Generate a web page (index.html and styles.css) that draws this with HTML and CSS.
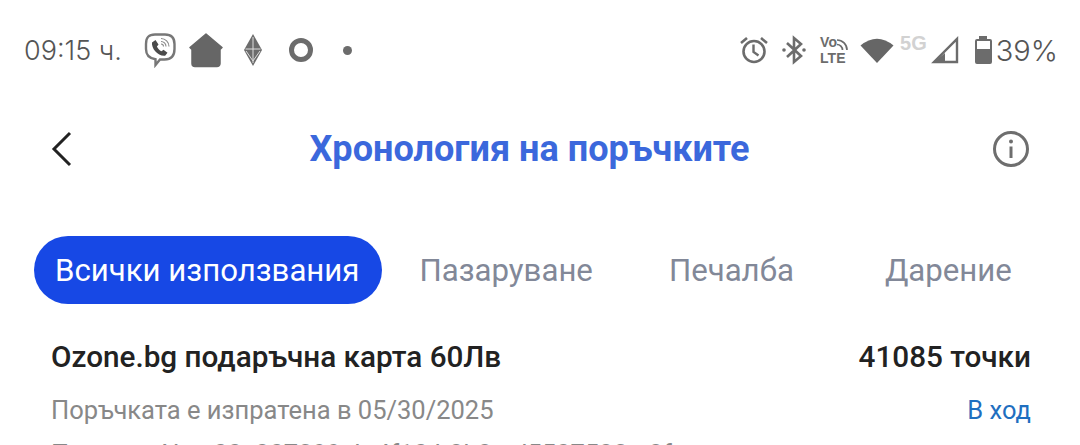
FILE: index.html
```html
<!DOCTYPE html>
<html lang="bg">
<head>
<meta charset="utf-8">
<title>Хронология на поръчките</title>
<link rel="stylesheet" href="styles.css">
</head>
<body>
<div class="page">
  <div class="status">
    <div class="status-left">
      <span class="time">09:15 ч.</span>
      <svg class="ic viber" width="34" height="36" viewBox="0 0 34 36"><path d="M12 2.500h10c6.500 0 9.500 3 9.500 9.500v5c0 7-3.500 10.500-10 10.500h-4.500l-4.500 5.500v-5.800c-6.500-.8-9.500-4-9.500-10.200v-5c0-6.500 2.500-9.500 9-9.500z" fill="none" stroke="#777" stroke-width="2.400"/><path d="M9 10.500l3.500-2.500 3 4.500-1.600 2c1 2.200 2.400 3.700 4.600 4.800l2-1.600 4 3-2.400 3c-7 .8-14-7-13.100-13.700z" fill="#4a4a4a"/><path d="M18 6.500a8 8 0 0 1 8 8M18 9.500a5 5 0 0 1 5 5M18 12a2.500 2.500 0 0 1 2.500 2.500" fill="none" stroke="#888" stroke-width="1.100"/></svg>
      <svg class="ic home" width="34" height="36" viewBox="0 0 34 36"><path d="M17 2L33 15.500l-2 2v14a3 3 0 0 1-3 3H6a3 3 0 0 1-3-3v-14l-2-2z" fill="#666" stroke="#666" stroke-width="1.500" stroke-linejoin="round"/></svg>
      <svg class="ic eth" width="20" height="34" viewBox="0 0 20 34"><path d="M10 1l9 16-9 16-9-16z" fill="#6c6c6c"/><path d="M10 4v26M2.500 16h15M3 18l7 10 7-10" fill="none" stroke="#ddd" stroke-width="1"/></svg>
      <span class="ring"></span>
      <span class="dot"></span>
    </div>
    <div class="status-right">
      <svg class="ic" width="30" height="30" viewBox="0 0 30 30"><circle cx="15" cy="16.500" r="10.500" fill="none" stroke="#6c6c6c" stroke-width="2.600"/><path d="M14.500 9.500v7.500l5 3.500" fill="none" stroke="#6c6c6c" stroke-width="2.400"/><path d="M2 8l6-5M28 8l-6-5" stroke="#6c6c6c" stroke-width="2.600"/></svg>
      <svg class="ic bt" width="26" height="30" viewBox="0 0 26 30"><path d="M6 8l14 13-7 6V3l7 6-14 13" fill="none" stroke="#6c6c6c" stroke-width="2.600"/><circle cx="3" cy="15" r="1.800" fill="#6c6c6c"/><circle cx="23" cy="15" r="1.800" fill="#6c6c6c"/></svg>
      <div class="volte"><span>Vo<svg width="11" height="12" viewBox="0 0 11 12"><path d="M0 2a10 10 0 0 1 10 10M0 6.500a5.500 5.500 0 0 1 5.500 5.500" fill="none" stroke="#6c6c6c" stroke-width="1.700"/></svg></span><span>LTE</span></div>
      <svg class="ic wifi" width="34" height="26" viewBox="0 0 34 26"><path d="M0.500 8.500Q17-5 33.500 8.500L17 26z" fill="#666"/></svg>
      <span class="fiveg">5G</span>
      <svg class="ic signal" width="28" height="28" viewBox="0 0 28 28"><path d="M26 3v23H3z" fill="none" stroke="#6c6c6c" stroke-width="2.400"/><path d="M2 27h12v-10z" fill="#6c6c6c"/></svg>
      <div class="battery"><span class="bat-cap"></span><span class="bat-body"><span class="bat-fill"></span></span></div>
      <span class="pct">39%</span>
    </div>
  </div>

  <div class="header">
    <svg class="back" width="22" height="36" viewBox="0 0 22 36"><path d="M19 2L3 18l16 16" fill="none" stroke="#222" stroke-width="3"/></svg>
    <h1 class="title">Хронология на поръчките</h1>
    <svg class="info" width="38" height="38" viewBox="0 0 38 38"><circle cx="19" cy="19" r="16.500" fill="none" stroke="#6e6e6e" stroke-width="3"/><circle cx="19" cy="11.500" r="2" fill="#6e6e6e"/><path d="M19 16.500v11.500" stroke="#6e6e6e" stroke-width="3"/></svg>
  </div>

  <div class="tabs">
    <span class="tab active">Всички използвания</span>
    <span class="tab t2">Пазаруване</span>
    <span class="tab t3">Печалба</span>
    <span class="tab t4">Дарение</span>
  </div>

  <div class="order">
    <div class="row r1"><span class="name">Ozone.bg подаръчна карта 60Лв</span><span class="name">41085 точки</span></div>
    <div class="row r2"><span class="meta">Поръчката е изпратена в 05/30/2025</span><span class="state">В ход</span></div>
    <div class="row r3"><span class="meta">Поръчка No.: 00c207399cb-4f10-b2b2-ad5507523-a2f</span></div>
  </div>
</div>
</body>
</html>
```
FILE: styles.css
```css
* { box-sizing: border-box; }
html, body { margin: 0; padding: 0; background: #fff; }
.page { width: 1080px; height: 445px; overflow: hidden; font-family: Roboto, "Noto Sans", sans-serif; }
.status { height: 100px; padding: 32px 22px 0 24px; display: flex; justify-content: space-between; align-items: flex-start; }
.status-left { display: flex; align-items: center; height: 36px; }
.time { font-family: Inter, Roboto, sans-serif; font-weight: 300; font-size: 27px; color: #555; width: 119px; }
.status-left .ic { flex: none; }
.home { margin-left: 12px; }
.eth { margin-left: 20px; }
.ring { width: 24px; height: 24px; border: 5px solid #6c6c6c; border-radius: 50%; margin-left: 26px; }
.dot { width: 9px; height: 9px; background: #6c6c6c; border-radius: 50%; margin-left: 30px; }
.status-right { display: flex; align-items: center; height: 36px; }
.status-right .ic { flex: none; }
.volte { display: flex; flex-direction: column; font: 700 14px/16px "Liberation Sans", sans-serif; color: #6c6c6c; margin-left: 13px; width: 30px; }
.volte span { display: flex; align-items: flex-end; }
.bt { margin-left: 12px; }
.wifi { margin-left: 10px; }
.fiveg { font: 700 20px/1 "Liberation Sans", sans-serif; color: #d2d2d2; margin-left: 6px; align-self: flex-start; margin-top: 1px; }
.signal { margin-left: 4px; }
.battery { display: flex; flex-direction: column; align-items: center; margin-left: 16px; width: 17px; }
.bat-cap { width: 8px; height: 3px; background: #6c6c6c; }
.bat-body { display: flex; align-items: flex-end; width: 17px; height: 25px; border: 2px solid #6c6c6c; border-radius: 2px; }
.bat-fill { display: block; width: 100%; height: 13px; background: #6c6c6c; }
.pct { font-family: Inter, Roboto, sans-serif; font-weight: 300; font-size: 29px; color: #555; margin-left: 4px; }
.header { height: 98px; padding: 0 51px; display: flex; align-items: center; justify-content: space-between; }
.back { flex: none; }
.title { margin: 0 6px 0 0; font-size: 36.100px; font-weight: 700; color: #3b68dc; }
.info { flex: none; margin-right: -1px; }
.tabs { margin-top: 38px; padding-left: 34px; display: flex; align-items: center; height: 68px; }
.tab { font-size: 31.200px; color: #828898; }
.active { background: #1748e5; color: #fff; height: 68px; border-radius: 34px; padding: 0 23px 0 21px; display: flex; align-items: center; }
.t2 { margin-left: 37px; }
.t3 { margin-left: 76px; }
.t4 { margin-left: 91px; }
.order { padding: 34px 49px 0 51px; }
.row { display: flex; justify-content: space-between; }
.name { font-size: 29.700px; font-weight: 500; color: #222; line-height: 38px; }
.meta { font-size: 25.500px; color: #888; line-height: 34px; }
.state { font-size: 25.500px; color: #1f6fc0; line-height: 34px; }
.r2 { margin-top: 17px; }
.r3 { margin-top: 10px; }
```
